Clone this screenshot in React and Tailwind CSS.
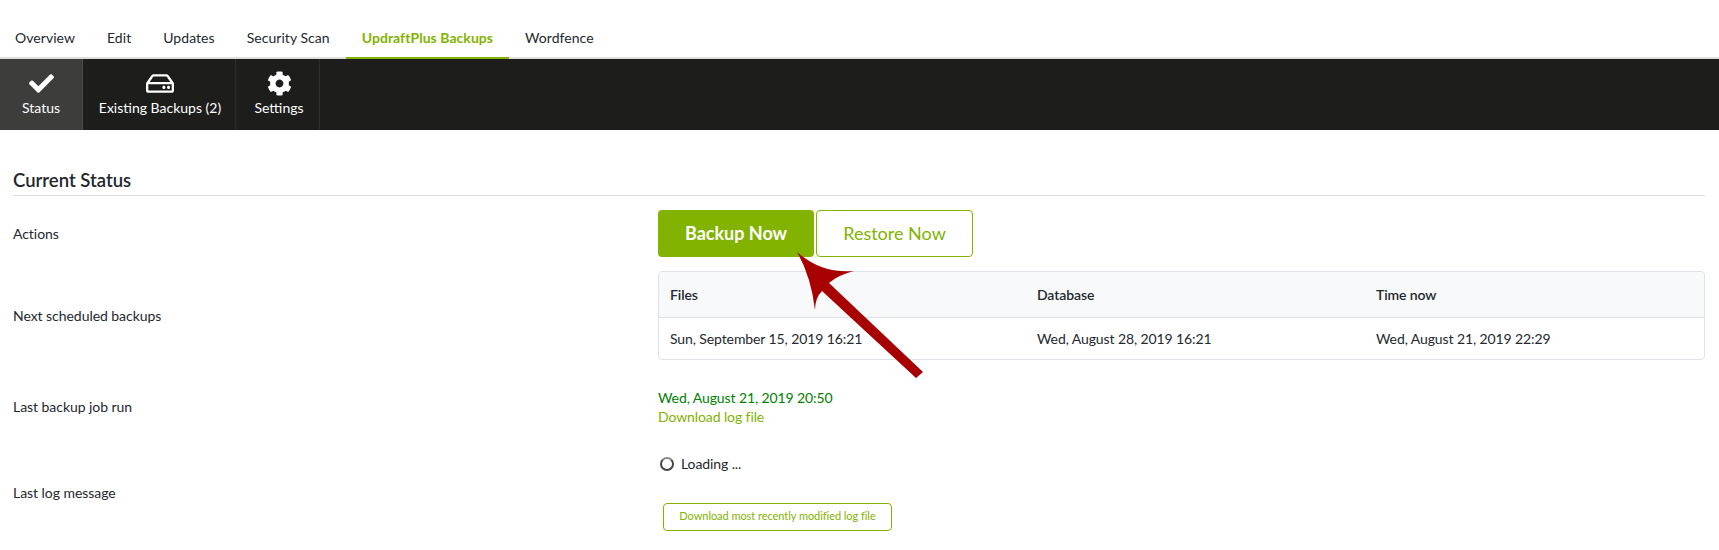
import { FaCheck, FaCog, FaRegHdd } from "react-icons/fa";

const tabs = ["Overview", "Edit", "Updates", "Security Scan", "UpdraftPlus Backups", "Wordfence"];

const subTabs = [
  { label: "Status", icon: FaCheck, className: "w-[83px] bg-[#3d3d3b] border-[#4a4a48]", iconClass: "h-[25px] w-[25px]" },
  { label: "Existing Backups (2)", icon: FaRegHdd, className: "w-[153px] pl-[2px] border-[#2e2e2c]", iconClass: "h-[25px] w-[28px]" },
  { label: "Settings", icon: FaCog, className: "w-[84px] pl-[3px] border-[#2e2e2c]", iconClass: "h-[25px] w-[25px]" },
];

const Row = ({ label, className, children }) => (
  <div className={`flex items-center ${className}`}>
    <div className="w-[645px] shrink-0 text-[14px] tracking-[-0.05px]">{label}</div>
    <div className="flex-1">{children}</div>
  </div>
);

const Arrow = () => (
  <svg className="absolute left-[790px] top-[245px]" width="140" height="140" viewBox="790 245 140 140">
    <path
      d="M797 252 Q822 274 854 271 Q838 275 829 283 L923 372 L916 378 L822 291 Q815 298 815 310 Q811 276 797 252 Z"
      fill="#a80000"
    />
  </svg>
);

const App = () => {
  return (
    <div className="relative h-[550px] w-[1719px] overflow-hidden bg-white font-['Lato',sans-serif] text-[#23282d]">
      <div className="flex h-[59px] items-end border-b-2 border-[#dedede]">
        {tabs.map((tab) =>
          tab === "UpdraftPlus Backups" ? (
            <div key={tab} className="-mb-[2px] border-b-2 border-[#82b300] px-4 pb-[9px] text-[14px] leading-[20px] font-bold tracking-[0.05px] text-[#82b300]">
              {tab}
            </div>
          ) : (
            <div key={tab} className="px-4 pb-[9px] text-[14px] leading-[20px] tracking-[0.05px] first:-ml-px">
              {tab}
            </div>
          )
        )}
      </div>

      <div className="flex h-[71px] bg-[#1d1d1b]">
        {subTabs.map((item) => (
          <div key={item.label} className={`flex flex-col items-center border-r pt-[12px] text-white ${item.className}`}>
            <item.icon className={item.iconClass} />
            <span className="mt-[2px] text-[14px] leading-[20px]">{item.label}</span>
          </div>
        ))}
      </div>

      <div className="pr-[14px] pl-[13px]">
        <h2 className="mt-[37px] border-b border-[#dedede] pb-[2px] text-[18.5px] leading-[26px] font-semibold">Current Status</h2>

        <Row label="Actions" className="mt-[14px] h-[47px]">
          <div className="flex gap-[2px]">
            <button className="h-[47px] w-[156px] rounded-[4px] bg-[#82b300] text-[18px] font-bold text-white">Backup Now</button>
            <button className="h-[47px] w-[157px] rounded-[4px] border border-[#82b300] text-[18px] text-[#82b300]">Restore Now</button>
          </div>
        </Row>

        <Row label="Next scheduled backups" className="mt-[14px] h-[88px]">
          <div className="overflow-hidden rounded-[4px] border border-[#dee2e6] text-[14px] tracking-[-0.1px]">
            <div className="flex h-[46px] items-center border-b border-[#dee2e6] bg-[#f8f9fa] font-semibold">
              <div className="w-[378px] pl-[11px]">Files</div>
              <div className="w-[339px]">Database</div>
              <div>Time now</div>
            </div>
            <div className="flex h-[41px] items-center">
              <div className="w-[378px] pl-[11px]">Sun, September 15, 2019 16:21</div>
              <div className="w-[339px]">Wed, August 28, 2019 16:21</div>
              <div>Wed, August 21, 2019 22:29</div>
            </div>
          </div>
        </Row>

        <Row label="Last backup job run" className="mt-[28px] h-[39px]">
          <div className="text-[14px] leading-[19px] tracking-[-0.1px]">
            <div className="text-[#008000]">Wed, August 21, 2019 20:50</div>
            <div className="text-[#82b300]">Download log file</div>
          </div>
        </Row>

        <Row label="Last log message" className="mt-[27px] h-[78px]">
          <div>
            <div className="flex h-[20px] items-center text-[14px] tracking-[-0.1px]">
              <span className="ml-[2px] h-[14px] w-[14px] rounded-full border-2 border-[#444] border-t-[#888]" />
              <span className="ml-[7px]">Loading ...</span>
            </div>
            <button className="mt-[29px] ml-[5px] block h-[28px] w-[229px] rounded-[4px] border border-[#82b300] text-[11px] tracking-[-0.05px] text-[#82b300]">
              Download most recently modified log file
            </button>
          </div>
        </Row>
      </div>

      <Arrow />
    </div>
  );
};

export default App;
